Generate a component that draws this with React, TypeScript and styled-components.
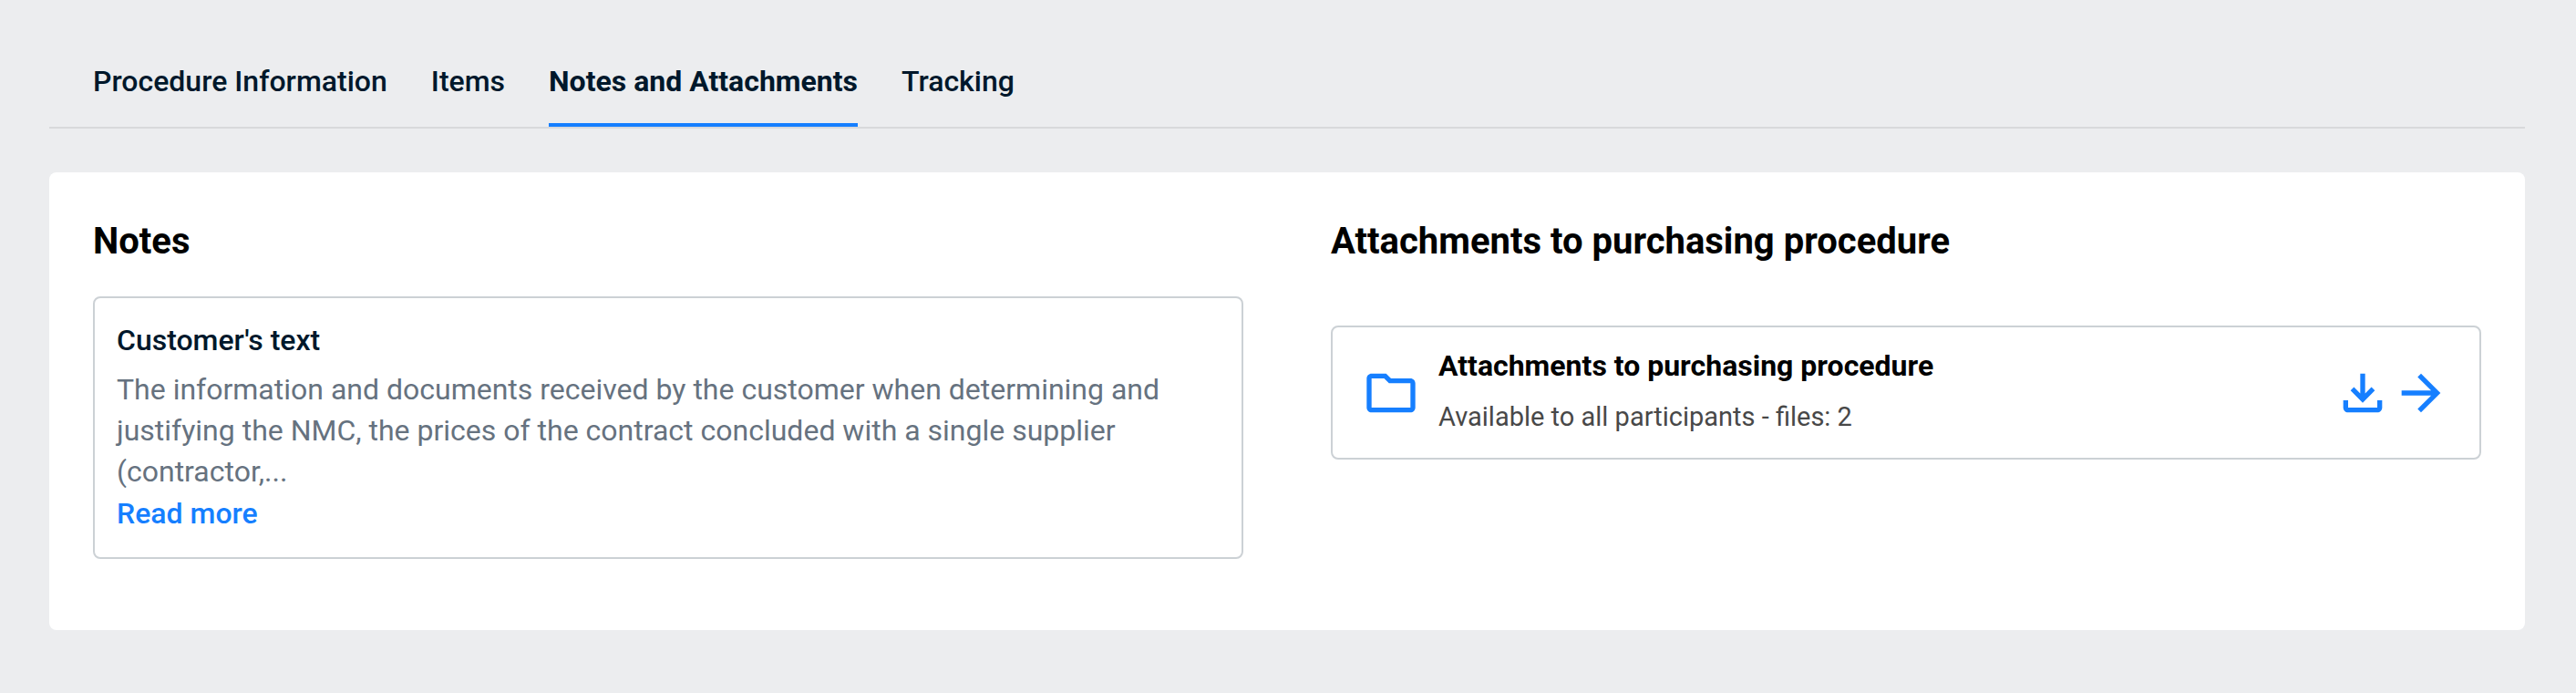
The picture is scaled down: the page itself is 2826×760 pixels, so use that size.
import React, { useState } from "react";
import styled, { createGlobalStyle, css } from "styled-components";

const colors = {
  page: "#ecedef",
  surface: "#ffffff",
  line: "#d8d9db",
  border: "#ccd1d5",
  accent: "#167fff",
  ink: "#00182b",
  heading: "#000000",
  muted: "#66727f",
  subtle: "#484848",
};

const GlobalStyle = createGlobalStyle`
  * {
    box-sizing: border-box;
  }

  body {
    margin: 0;
    background: ${colors.page};
    color: ${colors.ink};
    font-family: Roboto, "Liberation Sans", sans-serif;
    font-size: 32px;
  }
`;

const Page = styled.main`
  padding: 65px 56px 69px 54px;
`;

const TabBar = styled.nav`
  display: flex;
  gap: 48px;
  padding: 0 48px;
  border-bottom: 2px solid ${colors.line};
`;

const Tab = styled.button<{ $active: boolean }>`
  padding: 0 0 22px;
  border: 0;
  border-bottom: 4px solid transparent;
  background: none;
  color: ${colors.ink};
  font: 500 32px/48px Roboto, "Liberation Sans", sans-serif;
  cursor: pointer;

  ${({ $active }) =>
    $active &&
    css`
      border-bottom-color: ${colors.accent};
      font-weight: 700;
    `}
`;

const Panel = styled.section`
  display: grid;
  grid-template-columns: 1fr 1fr;
  gap: 96px;
  align-items: start;
  margin-top: 48px;
  padding: 48px 48px 78px;
  border-radius: 8px;
  background: ${colors.surface};
`;

const Column = styled.section<{ $gap: number }>`
  display: flex;
  flex-direction: column;
  gap: ${({ $gap }) => $gap}px;
  min-width: 0;
`;

const Heading = styled.h2`
  margin: 0;
  color: ${colors.heading};
  font-size: 40px;
  font-weight: 700;
  line-height: 56px;
`;

const Card = styled.article`
  border: 2px solid ${colors.border};
  border-radius: 8px;
`;

const NoteCard = styled(Card)`
  padding: 24px 24px 25px;
`;

const NoteTitle = styled.h3`
  margin: 0 0 10px;
  font-size: 32px;
  font-weight: 500;
  line-height: 44px;
`;

const NoteText = styled.p`
  margin: 0;
  color: ${colors.muted};
  line-height: 45px;
`;

const ReadMore = styled.a`
  display: block;
  width: fit-content;
  color: ${colors.accent};
  font-weight: 500;
  line-height: 46px;
  text-decoration: none;
`;

const FileCard = styled(Card)`
  display: flex;
  align-items: center;
  padding: 1px 32px 0;
`;

const FileInfo = styled.div`
  display: flex;
  flex: 1;
  flex-direction: column;
  gap: 8px;
  padding: 17px 20px 21px;
`;

const FileTitle = styled.h3`
  margin: 0;
  color: ${colors.heading};
  font-size: 32px;
  font-weight: 700;
  line-height: 48px;
`;

const FileMeta = styled.p`
  margin: 0;
  color: ${colors.subtle};
  font-size: 29px;
  font-weight: 400;
  line-height: 48px;
`;

const IconButton = styled.button`
  display: flex;
  padding: 0;
  border: 0;
  background: none;
  cursor: pointer;
`;

const IconSvg = styled.svg`
  flex: none;
  width: 64px;
  height: 64px;
  fill: ${colors.accent};
`;

const icons = {
  folder:
    "M9.17 6l2 2H20v10H4V6h5.17M10 4H4c-1.1 0-2 .9-2 2v12c0 1.1.9 2 2 2h16c1.1 0 2-.9 2-2V8c0-1.1-.9-2-2-2h-8l-2-2z",
  download:
    "M18 15v3H6v-3H4v3c0 1.1.9 2 2 2h12c1.1 0 2-.9 2-2v-3h-2zm-1-4l-1.41-1.41L13 12.17V4h-2v8.17L8.41 9.59 7 11l5 5 5-5z",
  arrow: "M12 4l-1.41 1.41L16.17 11H4v2h12.17l-5.58 5.59L12 20l8-8z",
};

function Icon({ name }: { name: keyof typeof icons }) {
  return (
    <IconSvg viewBox="0 0 24 24" aria-hidden="true">
      <path d={icons[name]} />
    </IconSvg>
  );
}

const tabs = ["Procedure Information", "Items", "Notes and Attachments", "Tracking"];

export default function App() {
  const [active, setActive] = useState("Notes and Attachments");

  return (
    <>
      <GlobalStyle />
      <Page>
        <TabBar>
          {tabs.map((tab) => (
            <Tab
              key={tab}
              type="button"
              $active={tab === active}
              aria-current={tab === active ? "page" : undefined}
              onClick={() => setActive(tab)}
            >
              {tab}
            </Tab>
          ))}
        </TabBar>

        <Panel>
          <Column $gap={32}>
            <Heading>Notes</Heading>
            <NoteCard>
              <NoteTitle>Customer's text</NoteTitle>
              <NoteText>
                The information and documents received by the customer when determining and
                justifying the NMC, the prices of the contract concluded with a single supplier
                (contractor,...
              </NoteText>
              <ReadMore href="#notes">Read more</ReadMore>
            </NoteCard>
          </Column>

          <Column $gap={64}>
            <Heading>Attachments to purchasing procedure</Heading>
            <FileCard>
              <Icon name="folder" />
              <FileInfo>
                <FileTitle>Attachments to purchasing procedure</FileTitle>
                <FileMeta>Available to all participants - files: 2</FileMeta>
              </FileInfo>
              <IconButton type="button" aria-label="Download attachments">
                <Icon name="download" />
              </IconButton>
              <IconButton type="button" aria-label="Open attachments">
                <Icon name="arrow" />
              </IconButton>
            </FileCard>
          </Column>
        </Panel>
      </Page>
    </>
  );
}
